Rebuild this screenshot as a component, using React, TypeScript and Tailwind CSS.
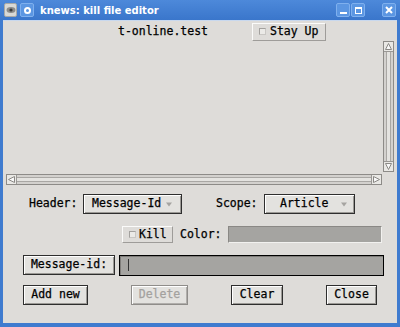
import React from "react";

const mono = { fontFamily: '"DejaVu Sans Mono", "Liberation Mono", monospace' };

function Indicator() {
  return (
    <span className="inline-block w-[7px] h-[7px] bg-[#ebeae7] border border-[#a3a19e] border-b-[#c9c7c4] border-r-[#c9c7c4]" />
  );
}

function Arrow() {
  return (
    <svg width="6" height="5" viewBox="0 0 6 5" className="shrink-0">
      <polygon points="0,0.5 6,0.5 3,4.5" fill="#a6a4a1" />
    </svg>
  );
}

const btn =
  "flex items-center justify-center h-[20px] border border-[#2e2e2e] bg-[#e3e2df] shadow-[inset_1px_1px_0_#ffffff,inset_-1px_-1px_0_#9b9995] text-black";

function TitleButton({ children, className = "" }: { children: React.ReactNode; className?: string }) {
  return (
    <div
      className={
        "w-[14px] h-[14px] rounded-[2px] bg-[#5b96e2] border border-[#7fb0ee] flex items-center justify-center " +
        className
      }
    >
      {children}
    </div>
  );
}

function VScroll() {
  return (
    <div className="w-[11px] h-[131px] border border-[#8d8b88] bg-[#d3d1ce] flex flex-col">
      <div className="h-[10px] flex items-center justify-center border-b border-[#9a9895] bg-[#e9e8e5]">
        <svg width="7" height="7" viewBox="0 0 7 7">
          <polygon points="3.5,0.5 6.5,6.5 0.5,6.5" fill="#f8f8f8" stroke="#8a8885" strokeWidth="1" />
        </svg>
      </div>
      <div className="flex-1 mx-[2px] border-l border-r border-[#a9a7a4] bg-[#e4e3e0]" />
      <div className="h-[10px] flex items-center justify-center border-t border-[#9a9895] bg-[#e9e8e5]">
        <svg width="7" height="7" viewBox="0 0 7 7">
          <polygon points="0.5,0.5 6.5,0.5 3.5,6.5" fill="#f8f8f8" stroke="#8a8885" strokeWidth="1" />
        </svg>
      </div>
    </div>
  );
}

function HScroll() {
  return (
    <div className="w-[376px] h-[11px] border border-[#8d8b88] bg-[#d3d1ce] flex">
      <div className="w-[10px] flex items-center justify-center border-r border-[#9a9895] bg-[#e9e8e5]">
        <svg width="7" height="7" viewBox="0 0 7 7">
          <polygon points="0.5,3.5 6.5,0.5 6.5,6.5" fill="#f8f8f8" stroke="#8a8885" strokeWidth="1" />
        </svg>
      </div>
      <div className="flex-1 my-[2px] border-t border-b border-[#a9a7a4] bg-[#e4e3e0]" />
      <div className="w-[10px] flex items-center justify-center border-l border-[#9a9895] bg-[#e9e8e5]">
        <svg width="7" height="7" viewBox="0 0 7 7">
          <polygon points="0.5,0.5 6.5,3.5 0.5,6.5" fill="#f8f8f8" stroke="#8a8885" strokeWidth="1" />
        </svg>
      </div>
    </div>
  );
}

export default function App() {
  return (
    <div className="w-[400px] h-[327px] bg-[#3f7bcf] flex flex-col overflow-hidden">
      {/* Title bar */}
      <div className="h-[20px] flex items-center bg-gradient-to-b from-[#4d89da] to-[#3a76cb] shrink-0">
        <div className="ml-[4px] w-[13px] h-[14px] rounded-[2px] bg-[#d9d9d6] border border-[#a9a9a6] flex items-center justify-center">
          <svg width="10" height="8" viewBox="0 0 10 8">
            <ellipse cx="5" cy="4" rx="4.5" ry="3" fill="#8c8c8a" />
            <circle cx="5" cy="4" r="1.6" fill="#3c3c3c" />
          </svg>
        </div>
        <TitleButton className="ml-[3px]">
          <span className="w-[7px] h-[7px] rounded-full border-[2px] border-white" />
        </TitleButton>
        <span
          className="ml-[6px] text-white font-bold text-[10px]"
          style={{ fontFamily: '"DejaVu Sans", "Liberation Sans", sans-serif' }}
        >
          knews: kill file editor
        </span>
        <div className="ml-auto flex items-center">
          <TitleButton>
            <span className="mt-[6px] w-[7px] h-[2px] bg-white" />
          </TitleButton>
          <TitleButton className="ml-[1px]">
            <span className="w-[7px] h-[7px] border border-white border-t-2" />
          </TitleButton>
          <TitleButton className="ml-[17px] mr-[4px]">
            <svg width="8" height="8" viewBox="0 0 8 8">
              <path d="M1 1 L7 7 M7 1 L1 7" stroke="white" strokeWidth="2" />
            </svg>
          </TitleButton>
        </div>
      </div>

      {/* Body */}
      <div
        className="ml-[3px] mr-[3px] mb-[4px] flex-1 bg-[#dedcd9] flex flex-col border-t border-[#c8d8ee] text-[11.5px] leading-none text-black [-webkit-text-stroke:0.25px_currentColor]"
        style={mono}
      >
        {/* Row 1 */}
        <div className="flex items-center h-[19px] mt-[1px]">
          <span className="ml-[115px] w-[134px]">t-online.test</span>
          <div className="flex items-center h-[18px] w-[74px] border-t border-l border-[#fbfbfa] border-b border-r border-b-[#9e9c99] border-r-[#9e9c99] pl-[6px]">
            <Indicator />
            <span className="ml-[4px]">Stay Up</span>
          </div>
        </div>

        {/* List area with scrollbars */}
        <div className="flex flex-col ml-[3px]">
          <div className="flex">
            <div className="w-[376px] h-[131px]" />
            <div className="ml-[1px]">
              <VScroll />
            </div>
          </div>
          <div className="mt-[2px]">
            <HScroll />
          </div>
        </div>

        {/* Header row */}
        <div className="flex items-center mt-[9px] h-[20px]">
          <span className="ml-[26px] w-[54px]">Header:</span>
          <div className={btn + " w-[99px] pl-[8px] justify-start"}>
            <span>Message-Id</span>
            <span className="ml-[5px] flex"><Arrow /></span>
          </div>
          <span className="ml-[34px] w-[48px]">Scope:</span>
          <div className={btn + " w-[91px] pl-[15px] justify-start"}>
            <span>Article</span>
            <span className="ml-[13px] flex"><Arrow /></span>
          </div>
        </div>

        {/* Kill row */}
        <div className="flex items-center mt-[12px] h-[17px]">
          <div className="ml-[119px] flex items-center h-[17px] w-[51px] border-t border-l border-[#fbfbfa] border-b border-r border-b-[#9e9c99] border-r-[#9e9c99] pl-[6px]">
            <Indicator />
            <span className="ml-[3px]">Kill</span>
          </div>
          <span className="ml-[7px] w-[48px]">Color:</span>
          <div className="w-[154px] h-[17px] bg-[#a5a4a1] border-t border-l border-[#8a8885] border-b border-r border-b-[#f2f1ef] border-r-[#f2f1ef]" />
        </div>

        {/* Message-id row */}
        <div className="flex items-center mt-[12px] h-[20px]">
          <div className={btn + " ml-[20px] w-[92px]"}>
            <span>Message-id:</span>
          </div>
          <div className="ml-[4px] w-[265px] h-[21px] border border-black bg-[#a5a4a1] shadow-[inset_1px_1px_0_#7f7d7a] flex items-center">
            <span className="ml-[8px] w-px h-[12px] bg-[#333]" />
          </div>
        </div>

        {/* Buttons row */}
        <div className="flex items-center mt-[10px] h-[20px]">
          <div className={btn + " ml-[20px] w-[65px]"}>Add new</div>
          <div className="ml-[43px] w-[57px] h-[20px] flex items-center justify-center border border-[#8f8d8a] bg-[#e3e2df] shadow-[inset_1px_1px_0_#ffffff,inset_-1px_-1px_0_#b0aeab] text-[#a3a19e]">
            Delete
          </div>
          <div className={btn + " ml-[43px] w-[52px]"}>Clear</div>
          <div className={btn + " ml-[43px] w-[51px]"}>Close</div>
        </div>
      </div>
    </div>
  );
}
